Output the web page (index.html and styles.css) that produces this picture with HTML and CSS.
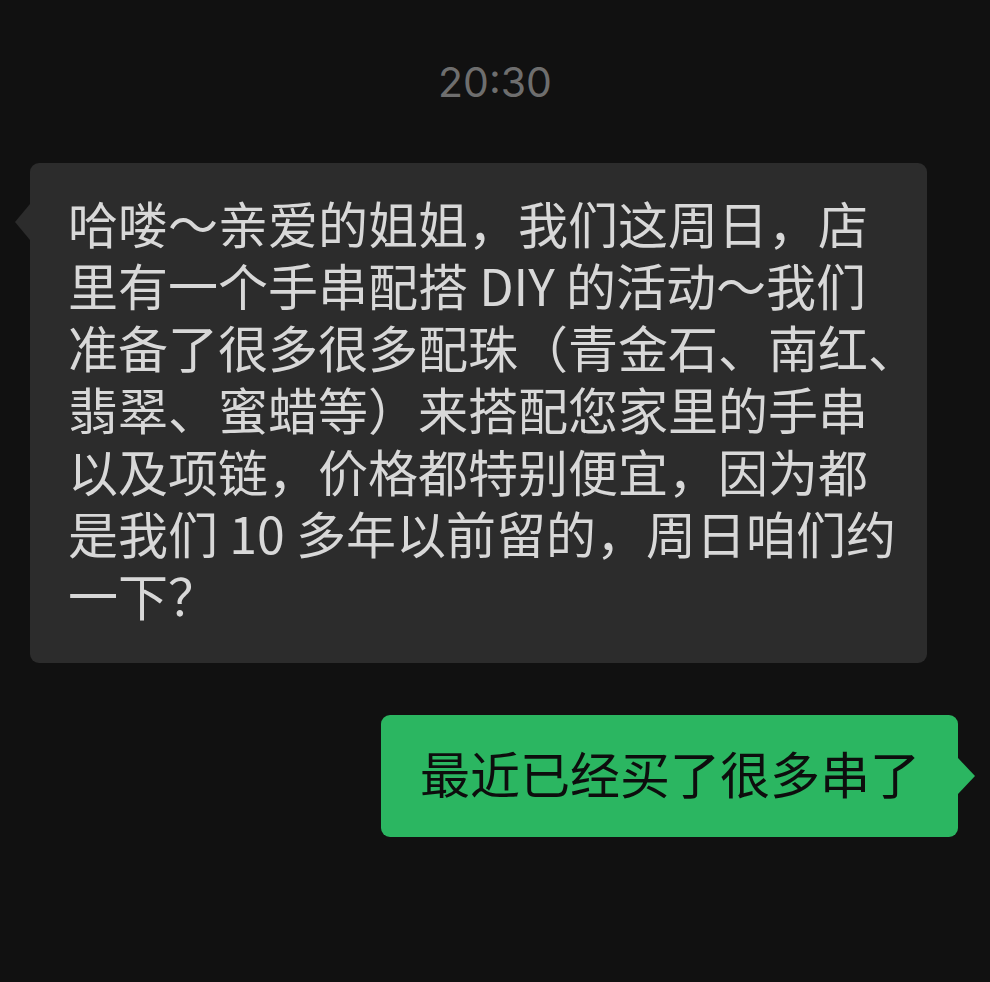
FILE: index.html
```html
<!DOCTYPE html>
<html lang="zh-CN">
<head>
    <meta charset="UTF-8">
    <meta name="viewport" content="width=device-width, initial-scale=1.0">
    <title>聊天</title>
    <link rel="stylesheet" href="styles.css">
</head>
<body>
    <div class="chat">
        <div class="time">20:30</div>

        <!-- incoming -->
        <div class="row left">
            <div class="bubble in">
                哈喽～亲爱的姐姐，我们这周日，店<br>
                里有一个手串配搭 DIY 的活动～我们<br>
                准备了很多很多配珠（青金石、南红、<br>
                翡翠、蜜蜡等）来搭配您家里的手串<br>
                以及项链，价格都特别便宜，因为都<br>
                是我们 10 多年以前留的，周日咱们约<br>
                一下？
            </div>
        </div>

        <!-- outgoing -->
        <div class="row right">
            <div class="bubble out">最近已经买了很多串了</div>
        </div>
    </div>
</body>
</html>
```

FILE: styles.css
```css
* {
    margin: 0;
    padding: 0;
    box-sizing: border-box;
}

body {
    background: #111111;
    font-family: "Noto Sans CJK SC", "Noto Sans", sans-serif;
    width: 990px;
    height: 982px;
    overflow: hidden;
}

.chat {
    display: flex;
    flex-direction: column;
}

.time {
    padding-top: 57px;
    height: 107px;
    text-align: center;
    font-family: Inter, "Noto Sans", sans-serif;
    font-size: 41px;
    line-height: 50px;
    color: #6e6e6e;
}

.row {
    display: flex;
    margin-top: 56px;
}

.row.left {
    justify-content: flex-start;
    padding-left: 30px;
}

.row.right {
    justify-content: flex-end;
    padding-right: 32px;
    margin-top: 52px;
}

.bubble {
    position: relative;
    border-radius: 9px;
    font-size: 50px;
    line-height: 62px;
    white-space: nowrap;
}

.bubble.in {
    width: 897px;
    padding: 28px 38px 38px;
    background: #2c2c2c;
    color: #d8d8d8;
}

.bubble.out {
    padding: 26px 38px 34px 39px;
    background: #2bb661;
    color: #0d0d0d;
}

/* tails */
.bubble.in::before {
    content: "";
    position: absolute;
    left: -15px;
    top: 41px;
    border-top: 18px solid transparent;
    border-bottom: 18px solid transparent;
    border-right: 15px solid #2c2c2c;
}

.bubble.out::after {
    content: "";
    position: absolute;
    right: -17px;
    top: 43px;
    border-top: 18px solid transparent;
    border-bottom: 18px solid transparent;
    border-left: 17px solid #2bb661;
}
```
